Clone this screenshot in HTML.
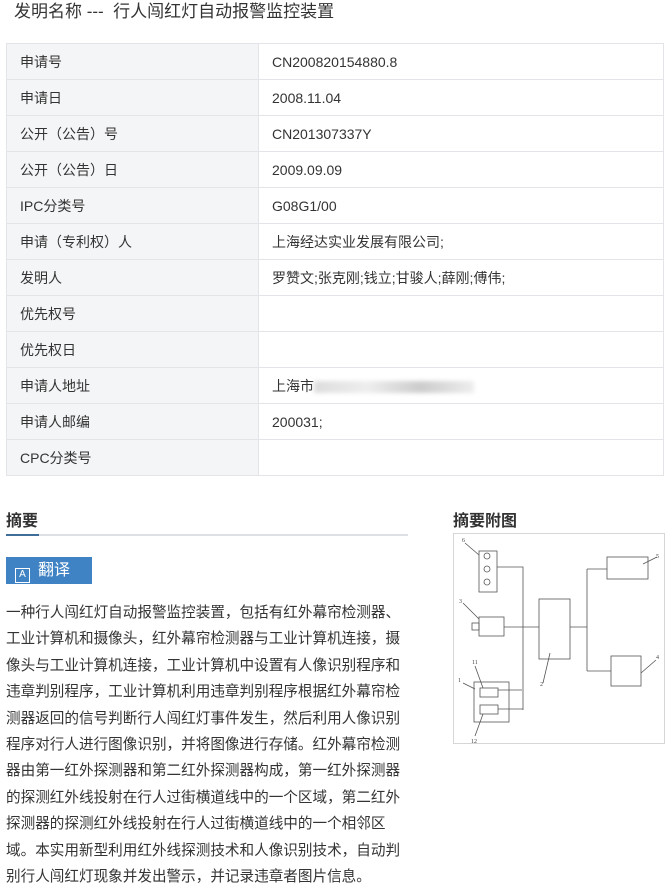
<!DOCTYPE html>
<html><head><meta charset="utf-8"><style>
body{margin:0;width:670px;height:884px;background:#fff;font-family:"Liberation Sans","Noto Sans CJK SC",sans-serif;color:#333;position:relative;overflow:hidden}
.t{position:absolute;left:14px;top:0;font-size:17px;line-height:24px;color:#333}
table{position:absolute;left:6px;top:43px;width:658px;border-collapse:collapse;font-size:14px}
td{border:1px solid #e2e4e8;height:35px;padding:0 0 0 13px;color:#333}
td.l{background:#f4f5f7;width:238px}
.h{position:absolute;font-weight:bold;font-size:16px}
.bar{position:absolute;left:6px;top:534px;width:402px;height:2px;background:#dde1e6}
.bar i{position:absolute;left:0;top:0;width:33px;height:2px;background:#3f6f98}
.btn{position:absolute;left:6px;top:557px;width:86px;height:27px;background:#3f83c4;color:#fff;font-size:16px;line-height:27px}
.p{position:absolute;left:6px;top:600px;font-size:14.6px;line-height:26.4px;color:#333;white-space:nowrap}
svg{position:absolute;left:453px;top:533px}
</style></head><body>
<div class="t">发明名称 ---&nbsp; 行人闯红灯自动报警监控装置</div>
<table>
<tr><td class="l">申请号</td><td>CN200820154880.8</td></tr>
<tr><td class="l">申请日</td><td>2008.11.04</td></tr>
<tr><td class="l">公开（公告）号</td><td>CN201307337Y</td></tr>
<tr><td class="l">公开（公告）日</td><td>2009.09.09</td></tr>
<tr><td class="l">IPC分类号</td><td>G08G1/00</td></tr>
<tr><td class="l">申请（专利权）人</td><td>上海经达实业发展有限公司;</td></tr>
<tr><td class="l">发明人</td><td>罗赞文;张克刚;钱立;甘骏人;薛刚;傅伟;</td></tr>
<tr><td class="l">优先权号</td><td></td></tr>
<tr><td class="l">优先权日</td><td></td></tr>
<tr><td class="l">申请人地址</td><td>上海市<span style="display:inline-block;width:160px;height:12px;background:linear-gradient(90deg,#ddd,#eee,#ccc,#eee);vertical-align:middle;filter:blur(2px)"></span></td></tr>
<tr><td class="l">申请人邮编</td><td>200031;</td></tr>
<tr><td class="l">CPC分类号</td><td></td></tr>
</table>
<div class="h" style="left:6px;top:507px">摘要</div>
<div class="bar"><i></i></div>
<div class="btn"><span style="display:inline-block;width:13px;height:13px;border:1.5px solid #fff;margin:0 8px 0 9px;vertical-align:-2px;font-size:10px;line-height:12px;text-align:center">A</span>翻译</div>
<div class="p">一种行人闯红灯自动报警监控装置，包括有红外幕帘检测器、<br>工业计算机和摄像头，红外幕帘检测器与工业计算机连接，摄<br>像头与工业计算机连接，工业计算机中设置有人像识别程序和<br>违章判别程序，工业计算机利用违章判别程序根据红外幕帘检<br>测器返回的信号判断行人闯红灯事件发生，然后利用人像识别<br>程序对行人进行图像识别，并将图像进行存储。红外幕帘检测<br>器由第一红外探测器和第二红外探测器构成，第一红外探测器<br>的探测红外线投射在行人过街横道线中的一个区域，第二红外<br>探测器的探测红外线投射在行人过街横道线中的一个相邻区<br>域。本实用新型利用红外线探测技术和人像识别技术，自动判<br>别行人闯红灯现象并发出警示，并记录违章者图片信息。</div>
<div class="h" style="left:453px;top:507px">摘要附图</div>
<svg width="212" height="212" viewBox="0 0 212 212" font-family="Liberation Serif" font-size="6" fill="none" stroke="#555" stroke-width="0.8">
<rect x="0.5" y="0.5" width="211" height="210" stroke="#ccc"/>
<rect x="26" y="18" width="18" height="41"/>
<circle cx="34" cy="23" r="3"/><circle cx="34" cy="36" r="3"/><circle cx="34" cy="49" r="3"/>
<path d="M44 34H70V177M51 94H86M117 94H134M134 36V138M134 36H154M134 138H158M45 157H69M45 176H70M12 10L26 22M10 70L26 86M22 133L30 155M10 150L22 156M22 203L30 181M90 150L97 120M190 31L204 24M188 140L203 127"/>
<rect x="26" y="84" width="25" height="19"/><rect x="19" y="90" width="7" height="7"/>
<rect x="86" y="66" width="31" height="60"/>
<rect x="154" y="24" width="41" height="22"/>
<rect x="158" y="123" width="30" height="30"/>
<rect x="21" y="149" width="35" height="40"/>
<rect x="27" y="155" width="18" height="9"/><rect x="27" y="172" width="18" height="9"/>
<g fill="#444" stroke="none"><text x="9" y="9">6</text><text x="6" y="70">3</text><text x="19" y="131">11</text><text x="5" y="149">1</text><text x="18" y="210">12</text><text x="87" y="153">2</text><text x="203" y="25">5</text><text x="203" y="126">4</text></g>
</svg>
</body></html>
